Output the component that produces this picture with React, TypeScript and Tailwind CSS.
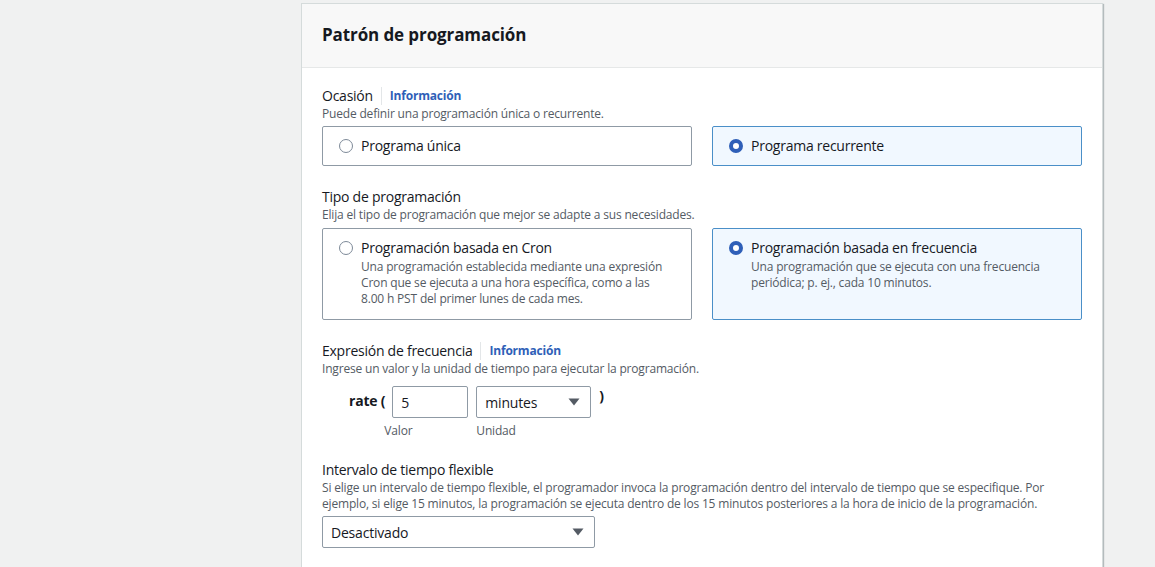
import { ReactNode } from 'react';

const font = { fontFamily: '"Open Sans", "Noto Sans", Arial, sans-serif' };

function Radio({ checked }: { checked: boolean }) {
  return checked ? (
    <span className="block w-[14px] h-[14px] rounded-full border-[4px] border-[#2f5fb8] bg-white shrink-0" />
  ) : (
    <span className="block w-[14px] h-[14px] rounded-full border-[1.5px] border-[#7d8998] bg-white shrink-0" />
  );
}

function RadioCard({ checked, title, desc }: { checked: boolean; title: string; desc?: ReactNode }) {
  return (
    <div
      className={`flex-1 rounded-[2px] border pl-[16px] pr-4 ${desc ? 'pt-[8px] pb-[12px]' : 'py-[8px]'} ${
        checked ? 'bg-[#f1f8ff] border-[#4a8fc8]' : 'bg-white border-[#8f9aa5]'
      }`}
    >
      <div className="flex items-start gap-[8px]">
        <div className="h-[22px] flex items-center">
          <Radio checked={checked} />
        </div>
        <div>
          <p className="text-[14px] leading-[22px] tracking-[-0.25px] text-[#16191f]">{title}</p>
          {desc && <p className="text-[12px] leading-4 tracking-[-0.18px] text-[#545b64]">{desc}</p>}
        </div>
      </div>
    </div>
  );
}

function Label({ text, info }: { text: string; info?: boolean }) {
  return (
    <div className="flex items-center h-5">
      <span className="text-[14px] leading-5 tracking-[-0.25px] text-[#16191f]">{text}</span>
      {info && (
        <>
          <span className="ml-2 mr-[8px] h-[18px] w-px bg-[#e3e6e8]" />
          <span className="text-[12px] font-bold tracking-[-0.2px] text-[#2f5fb8]">Información</span>
        </>
      )}
    </div>
  );
}

function Hint({ children }: { children: ReactNode }) {
  return <p className="text-[12px] leading-4 tracking-[-0.18px] text-[#545b64]">{children}</p>;
}

function Caret() {
  return (
    <svg width="12" height="8" viewBox="0 0 12 8" className="shrink-0">
      <path d="M0.5 0.5 L11.5 0.5 L6 7.5 Z" fill="#545b64" />
    </svg>
  );
}

export default function App() {
  return (
    <div className="min-h-[567px] bg-[#f0f1f1] pl-[301px] pt-[3px] overflow-hidden" style={font}>
      <div className="w-[802px] bg-white border border-[#d5dbdb] shadow-[1px_1px_1px_rgba(0,28,36,0.25)] min-h-[570px]">
        {/* Header */}
        <div className="h-[64px] bg-[#f8f8f8] border-b border-[#e6e8e8] px-5 flex items-center">
          <h2 className="text-[17px] font-bold tracking-[-0.1px] text-[#16191f] leading-6 -mt-[2px]">
            Patrón de programación
          </h2>
        </div>

        <div className="px-5 pt-[18px]">
          {/* Ocasión */}
          <Label text="Ocasión" info />
          <Hint>Puede definir una programación única o recurrente.</Hint>
          <div className="flex gap-5 mt-1 w-[760px]">
            <RadioCard checked={false} title="Programa única" />
            <RadioCard checked title="Programa recurrente" />
          </div>

          {/* Tipo */}
          <div className="mt-[21px]">
            <Label text="Tipo de programación" />
            <Hint>Elija el tipo de programación que mejor se adapte a sus necesidades.</Hint>
            <div className="flex gap-5 mt-[5px] w-[760px]">
              <RadioCard
                checked={false}
                title="Programación basada en Cron"
                desc={
                  <>
                    Una programación establecida mediante una expresión
                    <br />
                    Cron que se ejecuta a una hora específica, como a las
                    <br />
                    8.00 h PST del primer lunes de cada mes.
                  </>
                }
              />
              <RadioCard
                checked
                title="Programación basada en frecuencia"
                desc={
                  <>
                    Una programación que se ejecuta con una frecuencia
                    <br />
                    periódica; p. ej., cada 10 minutos.
                  </>
                }
              />
            </div>
          </div>

          {/* Expresión */}
          <div className="mt-[21px]">
            <Label text="Expresión de frecuencia" info />
            <Hint>Ingrese un valor y la unidad de tiempo para ejecutar la programación.</Hint>
            <div className="flex items-start mt-[9px] pl-[27px]">
              <span className="text-[14px] font-bold tracking-[-0.2px] text-[#16191f] leading-[30px] whitespace-nowrap mr-[7px]">
                rate (
              </span>
              <div className="flex flex-col">
                <div className="w-[76px] h-[32px] border border-[#8f9aa5] rounded-[2px] px-2 flex items-center text-[14px] text-[#16191f]">
                  5
                </div>
                <span className="text-[12px] leading-4 tracking-[-0.18px] text-[#545b64] mt-[5px] -ml-2">Valor</span>
              </div>
              <div className="flex flex-col ml-2">
                <div className="w-[115px] h-[32px] border border-[#8f9aa5] rounded-[2px] pl-2 pr-[10px] flex items-center justify-between text-[14px] tracking-[-0.2px] text-[#16191f]">
                  <span>minutes</span>
                  <Caret />
                </div>
                <span className="text-[12px] leading-4 tracking-[-0.18px] text-[#545b64] mt-[5px]">Unidad</span>
              </div>
              <span className="text-[14px] font-bold text-[#16191f] leading-[20px] ml-[8px]">)</span>
            </div>
          </div>

          {/* Intervalo */}
          <div className="mt-[21px]">
            <Label text="Intervalo de tiempo flexible" />
            <Hint>
              Si elige un intervalo de tiempo flexible, el programador invoca la programación dentro del intervalo de tiempo que se especifique. Por
              <br />
              ejemplo, si elige 15 minutos, la programación se ejecuta dentro de los 15 minutos posteriores a la hora de inicio de la programación.
            </Hint>
            <div className="mt-1 w-[273px] h-[32px] border border-[#8f9aa5] rounded-[2px] pl-2 pr-[10px] flex items-center justify-between text-[14px] tracking-[-0.2px] text-[#16191f]">
              <span>Desactivado</span>
              <Caret />
            </div>
          </div>
        </div>
      </div>
    </div>
  );
}
